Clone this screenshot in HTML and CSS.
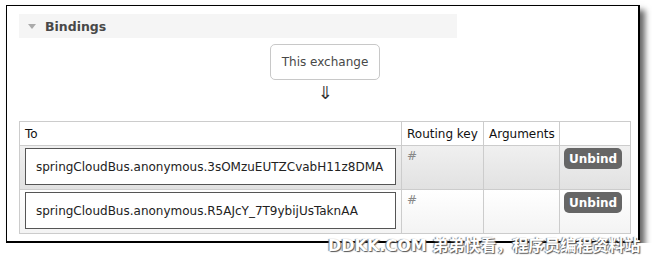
FILE: index.html
```html
<!DOCTYPE html>
<html lang="en">
<head>
<meta charset="UTF-8">
<meta name="viewport" content="width=device-width, initial-scale=1.0">
<title>Bindings</title>
<link rel="stylesheet" href="styles.css">
</head>
<body>

<div class="shot">
    <div class="section">
        <h2 class="section-title"><span class="caret"></span>Bindings</h2>

        <div class="bindings">
            <div class="exchange-box">This exchange</div>
            <div class="arrow">&#8659;</div>

            <table class="list">
                <thead>
                    <tr>
                        <th class="col-to">To</th>
                        <th class="col-key">Routing key</th>
                        <th class="col-args">Arguments</th>
                        <th class="col-act"></th>
                    </tr>
                </thead>
                <tbody>
                    <tr class="alt1">
                        <td><div class="queue-box">springCloudBus.anonymous.3sOMzuEUTZCvabH11z8DMA</div></td>
                        <td class="key">#</td>
                        <td></td>
                        <td class="act"><button class="unbind">Unbind</button></td>
                    </tr>
                    <tr class="alt2">
                        <td><div class="queue-box">springCloudBus.anonymous.R5AJcY_7T9ybijUsTaknAA</div></td>
                        <td class="key">#</td>
                        <td></td>
                        <td class="act"><button class="unbind">Unbind</button></td>
                    </tr>
                </tbody>
            </table>
        </div>
    </div>
</div>

<div class="watermark">DDKK.COM 弟弟快看，程序员编程资料站</div>

</body>
</html>
```

FILE: styles.css
```css
body {
    margin: 0;
    font-family: "DejaVu Sans", Verdana, sans-serif;
    font-size: 12px;
    background: #ffffff;
    color: #484848;
}

.shot {
    margin: 5px 0 0 6px;
    width: 631px;
    height: 235px;
    border-top: 1px solid #000;
    border-left: 1px solid #000;
    border-right: 2px solid #000;
    border-bottom: 2px solid #000;
    box-shadow: 5px 5px 6px rgba(0, 0, 0, 0.6);
    background: #fff;
    overflow: hidden;
}

.section {
    padding: 8px 0 0 12px;
}

.section-title {
    width: 438px;
    height: 24px;
    margin: 0;
    display: flex;
    align-items: center;
    background: #f5f5f5;
    font-size: 12.5px;
    font-weight: bold;
    color: #484848;
}

.caret {
    width: 0;
    height: 0;
    margin: 0 9px 0 9px;
    border-left: 4px solid transparent;
    border-right: 4px solid transparent;
    border-top: 5px solid #aaa;
}

.bindings {
    width: 612px;
    display: flex;
    flex-direction: column;
    align-items: center;
}

.exchange-box {
    margin-top: 6px;
    height: 34px;
    padding: 0 11px;
    display: flex;
    align-items: center;
    border: 1px solid #c8c8c8;
    border-radius: 5px;
    color: #484848;
}

.arrow {
    height: 41px;
    font-size: 18px;
    line-height: 26px;
    color: #333;
}

.list {
    width: 612px;
    border-collapse: collapse;
}

.list th,
.list td {
    border: 1px solid #cccccc;
    padding: 0;
    text-align: left;
    vertical-align: top;
}

.list th {
    height: 23px;
    padding-left: 5px;
    font-weight: normal;
    color: #111;
    vertical-align: middle;
}

.col-to { width: 376px; }
.col-key { width: 76px; }
.col-args { width: 70px; }

.list td {
    height: 40px;
    padding: 2px 5px 0 5px;
}

.alt1 {
    background: linear-gradient(#f0f0f0, #e1e1e1);
}

.alt2 {
    background: linear-gradient(#ffffff, #f3f3f3);
}

.queue-box {
    height: 35px;
    padding-left: 10px;
    display: flex;
    align-items: center;
    border: 1px solid #555;
    background: #fff;
    color: #222;
}

.key {
    color: #888;
    padding-top: 3px !important;
}

.act {
    padding-left: 4px !important;
}

.unbind {
    height: 21px;
    padding: 0 5px;
    border: none;
    border-radius: 5px;
    background: #666;
    color: #fff;
    font-family: "DejaVu Sans", Verdana, sans-serif;
    font-size: 12px;
    font-weight: bold;
}

.watermark {
    position: absolute;
    left: 328px;
    top: 236px;
    white-space: nowrap;
    font-family: "DejaVu Sans", "Noto Sans CJK SC", sans-serif;
    font-size: 16px;
    line-height: 19px;
    font-weight: bold;
    color: #fff;
    text-shadow: 1px 1px 1px #555, -1px 0 1px #777;
}
```
